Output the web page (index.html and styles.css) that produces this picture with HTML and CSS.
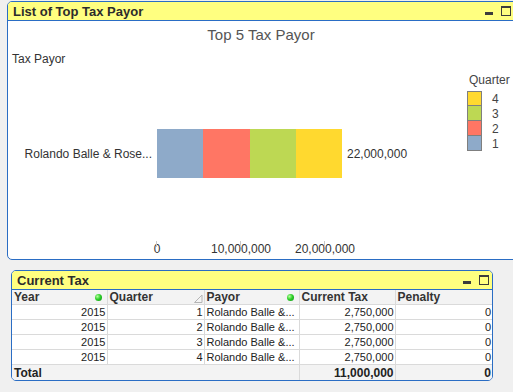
FILE: index.html
```html
<!DOCTYPE html>
<html>
<head>
    <title>List of Top Tax Payor</title>
    <link rel="stylesheet" href="styles.css">
</head>
<body>
    <div class="panel chart-panel">
        <div class="caption">
            <span class="caption-text">List of Top Tax Payor</span>
            <span class="btn-min"></span>
            <span class="btn-max"></span>
        </div>
        <div class="chart">
            <div class="chart-title">Top 5 Tax Payor</div>
            <div class="dim-title">Tax Payor</div>

            <div class="bar-row">
                <div class="bar-label">Rolando Balle &amp; Rose...</div>
                <div class="bar">
                    <span class="seg q1"></span>
                    <span class="seg q2"></span>
                    <span class="seg q3"></span>
                    <span class="seg q4"></span>
                </div>
                <div class="bar-value">22,000,000</div>
            </div>

            <div class="axis">
                <span class="tick">0</span>
                <span class="tick">10,000,000</span>
                <span class="tick">20,000,000</span>
            </div>

            <div class="legend">
                <div class="legend-title">Quarter</div>
                <div class="legend-item"><span class="swatch q4"></span>4</div>
                <div class="legend-item"><span class="swatch q3"></span>3</div>
                <div class="legend-item"><span class="swatch q2"></span>2</div>
                <div class="legend-item"><span class="swatch q1"></span>1</div>
            </div>
        </div>
    </div>

    <div class="panel table-panel">
        <div class="caption">
            <span class="caption-text">Current Tax</span>
            <span class="btn-min"></span>
            <span class="btn-max"></span>
        </div>
        <table class="grid">
            <colgroup>
                <col style="width: 95px">
                <col style="width: 97px">
                <col style="width: 95px">
                <col style="width: 96px">
                <col style="width: 97px">
            </colgroup>
            <thead>
                <tr>
                    <th>Year<span class="dot"></span></th>
                    <th>Quarter<svg class="sort" width="9" height="9" viewBox="0 0 9 9"><path d="M8 1 L8 8.5 L0.5 8.5 Z" fill="#f4f4f4" stroke="#b4b4b4" stroke-width="1"/></svg></th>
                    <th>Payor<span class="dot"></span></th>
                    <th>Current Tax</th>
                    <th>Penalty</th>
                </tr>
            </thead>
            <tbody>
                <tr><td class="num">2015</td><td class="num">1</td><td>Rolando Balle &amp;...</td><td class="num">2,750,000</td><td class="num">0</td></tr>
                <tr><td class="num">2015</td><td class="num">2</td><td>Rolando Balle &amp;...</td><td class="num">2,750,000</td><td class="num">0</td></tr>
                <tr><td class="num">2015</td><td class="num">3</td><td>Rolando Balle &amp;...</td><td class="num">2,750,000</td><td class="num">0</td></tr>
                <tr><td class="num">2015</td><td class="num">4</td><td>Rolando Balle &amp;...</td><td class="num">2,750,000</td><td class="num">0</td></tr>
            </tbody>
            <tfoot>
                <tr><td colspan="3">Total</td><td class="num">11,000,000</td><td class="num">0</td></tr>
            </tfoot>
        </table>
    </div>
</body>
</html>
```

FILE: styles.css
```css
html, body {
    margin: 0;
    padding: 0;
}
body {
    width: 513px;
    height: 392px;
    overflow: hidden;
    background: #f0f0f0;
    font-family: "Liberation Sans", Arial, sans-serif;
    color: #333;
}
.panel {
    box-sizing: border-box;
    border: 1px solid #2a6dc4;
    background: #fff;
    overflow: hidden;
}
.chart-panel {
    margin: 1px 0 0 7px;
    width: 508px;
    height: 259px;
    border-radius: 5px 0 0 5px;
}
.table-panel {
    margin: 10px 0 0 11px;
    width: 482px;
    border-radius: 5px;
}
.caption {
    height: 18px;
    background: #ffff80;
    border-bottom: 1px solid #2a6dc4;
    display: flex;
    align-items: center;
    padding: 0 3px 0 5px;
}
.caption-text {
    flex: 1;
    font-weight: bold;
    font-size: 13px;
    color: #2c2c2c;
}
.btn-min {
    width: 8px;
    height: 3px;
    margin: 5px 8px 0 0;
    background: #3c3c3c;
}
.btn-max {
    box-sizing: border-box;
    width: 10px;
    height: 10px;
    border: 1px solid #3c3c3c;
    border-top-width: 2px;
}

/* chart */
.chart {
    position: relative;
    height: 238px;
}
.chart-title {
    margin-top: 5px;
    font-size: 15px;
    line-height: 18px;
    text-align: center;
    color: #555;
}
.dim-title {
    margin-top: 8px;
    padding-left: 4px;
    font-size: 12px;
    line-height: 14px;
    color: #333;
}
.bar-row {
    margin-top: 63px;
    display: flex;
    align-items: center;
    height: 49px;
    font-size: 12px;
}
.bar-label {
    width: 144px;
    padding-right: 5px;
    text-align: right;
    color: #333;
}
.bar {
    display: flex;
    height: 49px;
    width: 185px;
}
.seg {
    flex: 1;
}
.q1 { background: #8eaac9; }
.q2 { background: #ff7664; }
.q3 { background: #bdd853; }
.q4 { background: #ffd92f; }
.bar-value {
    margin-left: 5px;
    color: #333;
}
.axis {
    margin: 64px 0 0 107px;
    display: flex;
    font-size: 12px;
    line-height: 14px;
    color: #333;
}
.tick {
    position: relative;
    width: 84px;
    text-align: center;
}
.tick::before {
    content: "";
    position: absolute;
    left: 41px;
    top: -1px;
    height: 6px;
    border-left: 1px solid #c8c8c8;
}
.legend {
    position: absolute;
    left: 459px;
    top: 47px;
    font-size: 12px;
    color: #444;
}
.legend-title {
    padding-left: 2px;
    line-height: 14px;
    margin-bottom: 4px;
}
.legend-item {
    display: flex;
    align-items: center;
    height: 15px;
}
.swatch {
    box-sizing: border-box;
    width: 15px;
    height: 15px;
    border: 1px solid #7f7f7f;
    margin-right: 10px;
}
.legend-item + .legend-item .swatch {
    border-top: none;
}

/* table */
.grid {
    border-collapse: collapse;
    table-layout: fixed;
    width: 480px;
    font-size: 11px;
    color: #222;
}
.grid th, .grid td {
    height: 14px;
    padding: 0 1px 0 2px;
    border-right: 1px solid #dadada;
    border-bottom: 1px solid #dadada;
    white-space: nowrap;
    overflow: hidden;
    line-height: 14px;
}
.grid th:last-child, .grid td:last-child {
    border-right: none;
}
.grid th {
    position: relative;
    text-align: left;
    font-size: 12px;
    background: #f3f3f3;
    color: #333;
}
.grid td.num {
    text-align: right;
}
.grid tfoot td {
    background: #f3f3f3;
    font-weight: bold;
    font-size: 12px;
    border-bottom: none;
    height: 15px;
}
.dot {
    position: absolute;
    right: 5px;
    top: 4px;
    width: 7px;
    height: 7px;
    border-radius: 50%;
    background: radial-gradient(circle at 35% 35%, #b6ff9e 0%, #2fd02a 45%, #0b8c12 100%);
}
.sort {
    position: absolute;
    right: 1px;
    top: 4px;
}
```
